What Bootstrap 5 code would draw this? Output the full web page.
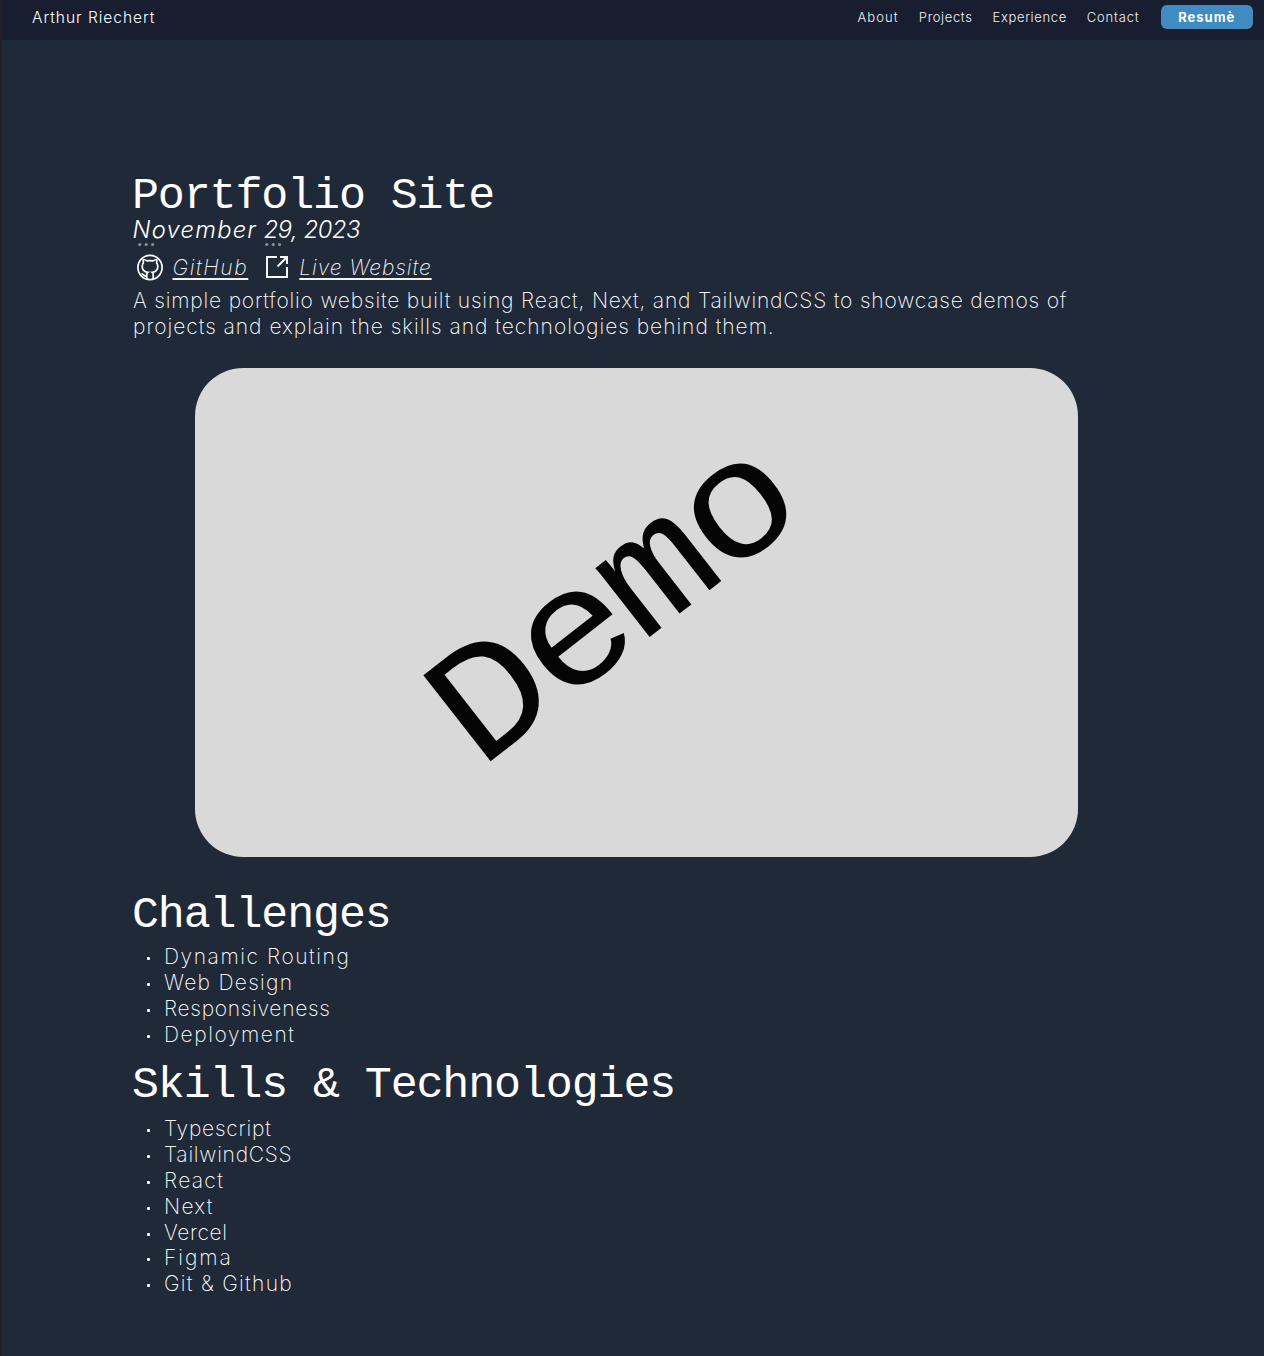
<!DOCTYPE html>
<html lang="en">
<head>
<meta charset="utf-8">
<meta name="viewport" content="width=device-width, initial-scale=1">
<title>Arthur Riechert – Portfolio Site</title>
<link rel="stylesheet" href="https://cdn.jsdelivr.net/npm/bootstrap@5.3.0/dist/css/bootstrap.min.css">
<style>
  body { background: #202938; color: #fff; font: 250 21px/25.85px Inter, sans-serif; min-height: 1356px; border-left: 2px solid #202020; overflow-x: hidden; }
  .site-bar { background: #181e30; height: 40px; padding: 0 11px 5px 30px; }
  .site-name { font-size: 15.5px; font-weight: 300; letter-spacing: .98px; }
  .site-links { font-size: 13px; font-weight: 330; gap: 20px; }
  .site-links a { color: #f2f3f5; text-decoration: none; letter-spacing: .64px; }
  .site-links a.about { letter-spacing: 1.1px; }
  .site-links a.contact { letter-spacing: .8px; }
  .site-links .btn-resume { background: #3f8bc2; color: #fff; font-weight: 700; font-size: 13px; line-height: 24px; letter-spacing: 1px; width: 92.5px; height: 24.5px; padding: 0; border: 0; border-radius: 6px; margin: -1.5px 0 0 1px; }
  .project { padding: 134.5px 0 0 131px; }
  .mono-title { font: 400 45px/43px "Liberation Mono", monospace; letter-spacing: -1.14px; margin: 0 0 0 -1px; white-space: nowrap; }
  .date { font-size: 23.7px; font-weight: 300; line-height: 24px; font-style: italic; margin-left: -.5px; }
  .hint { position: relative; }
  .hint svg { position: absolute; left: 4px; top: 27px; fill: #8b919b; }
  .hint.day svg { left: 0; }
  .month { letter-spacing: 1.25px; } .day { letter-spacing: -.5px; } .year { letter-spacing: -.5px; }
  .links { height: 46px; padding-top: 6px; }
  .links a { color: #f2f3f5; font-style: italic; text-decoration: underline; text-decoration-thickness: 1.5px; text-underline-offset: 2.5px; }
  .links a.repo { margin-left: 8.5px; letter-spacing: 1.6px; }
  .links a.live { margin-left: 11.5px; letter-spacing: .95px; }
  .links .out { margin-left: 17.5px; margin-top: -1px; }
  .summary { width: 960px; white-space: nowrap; line-height: 26px; }
  .demo { width: 882.5px; height: 489px; margin: 28.2px 0 37px 62px; border-radius: 48px; background: #d9d9d9; color: #050505; }
  .demo span { font: 400 166px/1 "Liberation Mono", monospace; letter-spacing: -5.5px; transform: translate(-21px, -4px) rotate(-38deg) scaleX(1.1); }
  .items { list-style: none; padding: 0 0 0 31px; margin: 7.8px 0 16.4px; }
  .mono-title + .last-items { margin-top: 8.9px; }
  .items li { position: relative; }
  .items li::before { content: ""; position: absolute; left: -17.5px; top: 13px; width: 3px; height: 3px; border-radius: 1px; background: #fff; }
  .ls-5 { letter-spacing: .6px; } .ls-6 { letter-spacing: .7px; } .ls-7 { letter-spacing: .75px; } .ls-8 { letter-spacing: .805px; } .ls-9 { letter-spacing: .97px; }
  .ls-12 { letter-spacing: 1.3px; } .ls-14 { letter-spacing: 1.55px; } .ls-17 { letter-spacing: 1.95px; }
</style>
</head>
<body>
<header class="site-bar d-flex align-items-center justify-content-between">
  <span class="site-name">Arthur Riechert</span>
  <nav class="site-links d-flex align-items-center">
    <a class="about" href="#">About</a><a href="#">Projects</a><a href="#">Experience</a><a class="contact" href="#">Contact</a>
    <a class="btn btn-resume" href="#">Resumè</a>
  </nav>
</header>
<main class="project">
  <h1 class="mono-title">Portfolio Site</h1>
  <div class="date"><span class="hint month">November<svg width="20" height="5"><circle cx="2.8" cy="2.5" r="1.6"/><circle cx="9.2" cy="2.5" r="1.6"/><circle cx="15.6" cy="2.5" r="1.6"/></svg></span> <span class="hint day">29,<svg width="20" height="5"><circle cx="2.8" cy="2.5" r="1.6"/><circle cx="9.2" cy="2.5" r="1.6"/><circle cx="15.6" cy="2.5" r="1.6"/></svg></span> <span class="year">2023</span></div>
  <div class="links d-flex align-items-center">
    <svg class="ms-1" width="27" height="28" viewBox="0 0 27 28" fill="none" stroke="#fff" stroke-width="1.7"><circle cx="13" cy="13.500" r="12.1"/><path d="M9.800 25.500v-5c0-1 .3-1.700 1-2.200C7.300 17.800 5.200 16 5.200 12.500c0-1.600.5-2.800 1.200-3.800-.3-1-.2-2.200 0-3.200 1.400.1 2.500.7 3.500 1.400 2-.4 4.200-.4 6.200 0 1-.7 2.100-1.300 3.500-1.400.2 1 .3 2.200 0 3.200.7 1 1.200 2.200 1.200 3.800 0 3.500-2.100 5.300-5.600 5.800.7.500 1 1.200 1 2.200v5M9.800 22c-3 .8-3.500-2-5.300-2.500"/></svg>
    <a class="repo" href="#">GitHub</a>
    <svg class="out" width="22" height="22" viewBox="0 0 22 22" fill="none" stroke="#fff" stroke-width="1.9"><path d="M11 1H1v20h20V11M14 1h7v7M21 1l-9.500 9.500"/></svg>
    <a class="live" href="#">Live Website</a>
  </div>
  <div class="summary"><div class="ls-8">A simple portfolio website built using React, Next, and TailwindCSS to showcase demos of</div><div class="ls-9">projects and explain the skills and technologies behind them.</div></div>
  <div class="demo d-flex align-items-center justify-content-center"><span>Demo</span></div>
  <h2 class="mono-title">Challenges</h2>
  <ul class="items">
    <li class="ls-14">Dynamic Routing</li>
    <li class="ls-12">Web Design</li>
    <li class="ls-6">Responsiveness</li>
    <li class="ls-14">Deployment</li>
  </ul>
  <h2 class="mono-title">Skills &amp; Technologies</h2>
  <ul class="items last-items">
    <li class="ls-7">Typescript</li>
    <li class="ls-7">TailwindCSS</li>
    <li class="ls-12">React</li>
    <li class="ls-12">Next</li>
    <li class="ls-5">Vercel</li>
    <li class="ls-17">Figma</li>
    <li class="ls-12">Git &amp; Github</li>
  </ul>
</main>
<script src="https://cdn.jsdelivr.net/npm/bootstrap@5.3.0/dist/js/bootstrap.bundle.min.js"></script>
</body>
</html>
